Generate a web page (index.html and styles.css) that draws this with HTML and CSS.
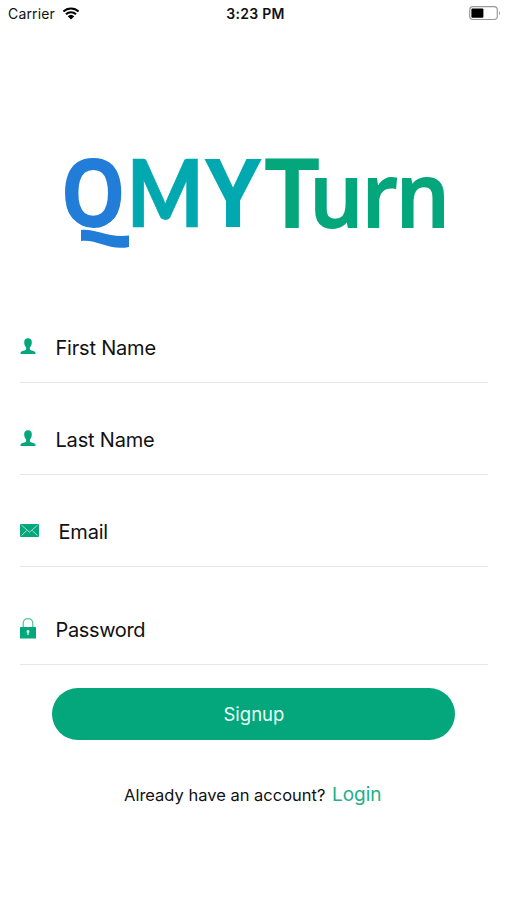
FILE: index.html
```
<!DOCTYPE HTML>
<html>
<head>
<meta charset="utf-8">
<title>Signup</title>
<link rel="stylesheet" href="styles.css">
</head>
<body>

    <div class="status-bar">
        <div class="status-left">
            <span>Carrier</span>
            <svg class="wifi" viewBox="0 0 18 13" width="18" height="13">
                <path d="M1.4 4.5 A11 11 0 0 1 16.6 4.5 M4 7.3 A7.2 7.2 0 0 1 14 7.3" fill="none" stroke="#000" stroke-width="2.1"/>
                <path d="M9 12.6 L5.7 9.3 A4.8 4.8 0 0 1 12.3 9.3 Z"/>
            </svg>
        </div>
        <div class="status-time">3:23 PM</div>
        <div class="status-right">
            <svg viewBox="0 0 32 15" width="32" height="15">
                <rect x="0.7" y="0.7" width="27.6" height="12.8" rx="3.2" fill="#fff" stroke="#999" stroke-width="1.2"/>
                <rect x="2.4" y="2.4" width="12" height="9.4" rx="1"/>
                <path d="M30 5 Q32 7.2 30 9.4 Z" fill="#999"/>
            </svg>
        </div>
    </div>

    <svg class="logo" viewBox="0 0 390 100" width="390" height="100">
        <clipPath id="bowl"><rect x="4" y="0" width="59" height="75" rx="29" ry="33"/></clipPath>
        <g clip-path="url(#bowl)"><text class="logo-q" transform="translate(.5 73.5) scale(.87 1)">Q</text></g>
        <path class="logo-tail" d="M21 77 C35 75 47 85 69 82.5 V94 C49 98 37 86 21 88 Z"/>
        <text class="logo-m" transform="translate(67 74) scale(.855 1)">M</text>
        <text class="logo-y" transform="translate(144.5 74) scale(.96 1)">Y</text>
        <text class="logo-turn" transform="translate(205 73.5) scale(1.01 .99)">T</text>
        <text class="logo-turn" transform="translate(249.5 73.5) scale(.89 .93)">u</text>
        <text class="logo-turn" transform="translate(302 73.5) scale(.87 .93)">r</text>
        <text class="logo-turn" transform="translate(336 73.5) scale(.89 .93)">n</text>
    </svg>

    <div class="form">
        <div class="field field-name">
            <svg class="icon" viewBox="0 0 16 17" width="16" height="17">
                <path d="M8 .3 C5.3 .3 4 2.1 4.2 4.5 C4.3 7 5.1 8.2 6.1 9.4 V11.6 C5.6 13 1.2 12.5 .5 15 V16 H15.5 V15 C14.8 12.5 10.4 13 9.9 11.6 V9.4 C10.9 8.2 11.7 7 11.8 4.5 C12 2.1 10.7 .3 8 .3 Z"/>
            </svg>
            <span class="label">First Name</span>
        </div>
        <div class="field field-name">
            <svg class="icon" viewBox="0 0 16 17" width="16" height="17">
                <path d="M8 .3 C5.3 .3 4 2.1 4.2 4.5 C4.3 7 5.1 8.2 6.1 9.4 V11.6 C5.6 13 1.2 12.5 .5 15 V16 H15.5 V15 C14.8 12.5 10.4 13 9.9 11.6 V9.4 C10.9 8.2 11.7 7 11.8 4.5 C12 2.1 10.7 .3 8 .3 Z"/>
            </svg>
            <span class="label">Last Name</span>
        </div>
        <div class="field field-email">
            <svg class="icon" viewBox="0 0 19 13" width="19" height="13">
                <rect width="19" height="13" rx="1"/>
                <path d="M1.5 1.2 L9.5 8.2 L17.5 1.2 M1.5 11.5 L6.8 6.5 M17.5 11.5 L12.2 6.5" fill="none" stroke="#b5e5d5" stroke-width=".9"/>
            </svg>
            <span class="label">Email</span>
        </div>
        <div class="field field-password">
            <svg class="icon" viewBox="0 0 16 21" width="16" height="21">
                <path d="M3.2 9.5 V5.4 C3.2 -.9 12.8 -.9 12.8 5.4 V9.5" fill="none" stroke="#5bc4a1" stroke-width="1.3"/>
                <rect y="9" width="16" height="11.5" rx=".6"/>
                <path d="M8 12 a1.6 1.6 0 0 1 .7 3 V17 H7.3 V15 A1.6 1.6 0 0 1 8 12 Z" fill="#c8eee0"/>
            </svg>
            <span class="label">Password</span>
        </div>
    </div>

    <button class="signup">Signup</button>

    <div class="login-row">
        <span class="question">Already have an account?</span>
        <a class="login">Login</a>
    </div>

</body>
</html>
```
FILE: styles.css
```
body {
  margin: 0;
  height: 900px;
  background-color: #fff;
  color: #111;
  font-family: Inter, "Liberation Sans", sans-serif;
  overflow: hidden;
}

.status-bar {
  display: grid;
  grid-template-columns: 1fr auto 1fr;
  align-items: center;
  height: 26px;
  padding: 0 6px 0 8px;
  font-size: 14px;
}

.status-left {
  display: flex;
  align-items: center;
  gap: 7px;
  letter-spacing: 0.15px;
}

.status-time {
  font-weight: 600;
  font-size: 14px;
  letter-spacing: 0.3px;
  padding-left: 2px;
}

.status-right {
  display: flex;
  justify-content: flex-end;
}

.logo {
  display: block;
  margin: 127px 0 0 60px;
  overflow: visible;
}

.logo-q {
  font: 700 95px "Noto Sans", sans-serif;
  fill: #227dd8;
}

.logo-tail {
  fill: #227dd8;
}

.logo-m {
  font: 900 94px Lato, sans-serif;
  fill: #00a9b0;
  stroke: #00a9b0;
  stroke-width: 0.7px;
}

.logo-y {
  font: 700 95px "Noto Sans", sans-serif;
  fill: #00a9b0;
}

.logo-turn {
  font: 600 95px "Open Sans", "Noto Sans", sans-serif;
  fill: #04a67c;
  stroke: #04a67c;
  stroke-width: 2px;
}

.form {
  margin: 38px 19px 0 20px;
}

.field {
  display: flex;
  box-sizing: border-box;
  height: 92px;
  padding-top: 45px;
  border-bottom: 1px solid #e6e6e6;
}

.icon {
  fill: #04a67c;
  margin-right: 19.5px;
}

.field-name .icon {
  margin-top: 2px;
}

.field-email .icon {
  margin-top: 4px;
}

.label {
  font-size: 20px;
  line-height: 24px;
  letter-spacing: -0.2px;
}

.field-password {
  height: 98px;
  padding-top: 51px;
}

.field-password .label {
  letter-spacing: -0.35px;
}

.signup {
  display: block;
  width: 403px;
  height: 52px;
  margin: 23px 0 0 52.4px;
  padding: 0;
  border: none;
  border-radius: 27px;
  background-color: #04a67c;
  color: #e8fff7;
  font-family: inherit;
  font-size: 18.5px;
}

.login-row {
  display: flex;
  align-items: baseline;
  margin: 43px 0 0 124px;
  gap: 6.5px;
}

.question {
  font-size: 16.5px;
}

.login {
  font-size: 19px;
  color: #1eb087;
}
```
